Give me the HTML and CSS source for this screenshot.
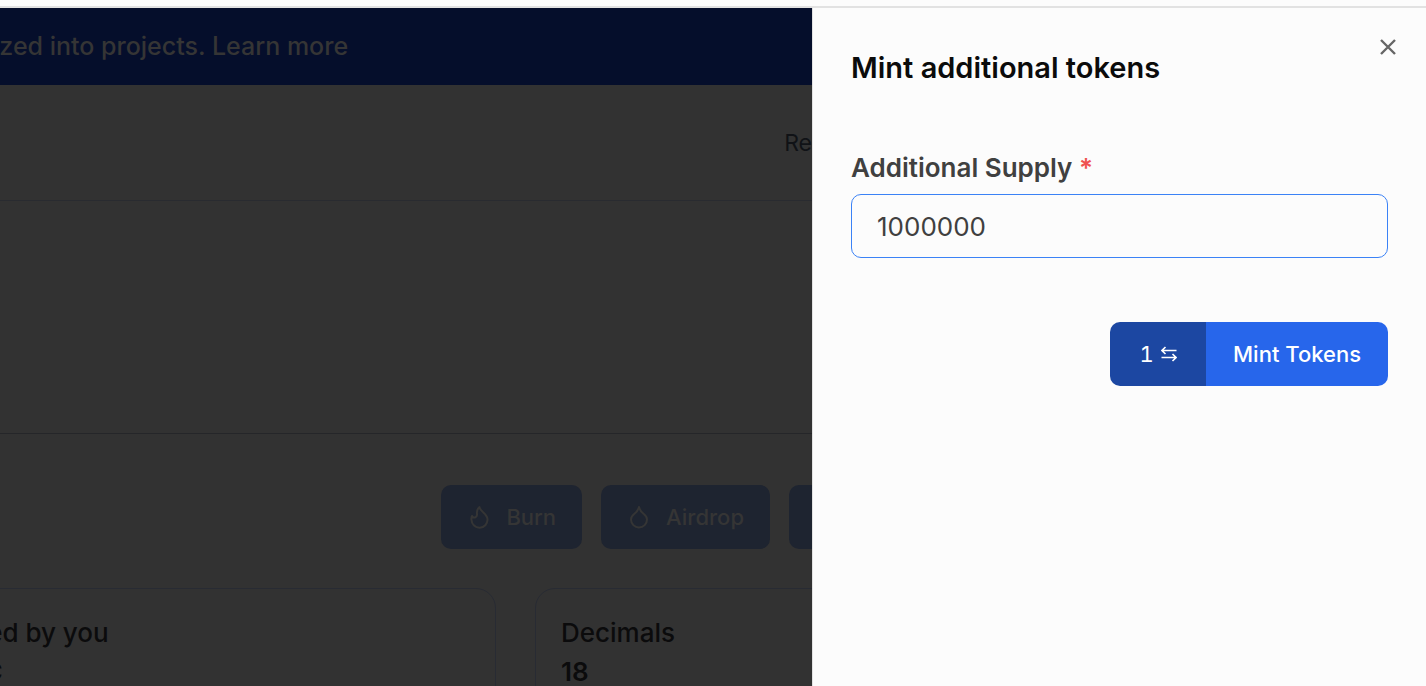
FILE: index.html
```html
<!DOCTYPE html>
<html lang="en">
<head>
<meta charset="utf-8">
<meta name="viewport" content="width=device-width, initial-scale=1">
<title>Mint additional tokens</title>
<link rel="stylesheet" href="styles.css">
</head>
<body>
<div class="top-edge"></div>
<div class="workspace">
  <main class="backdrop">
    <div class="page">
      <div class="banner"><span>organized into projects. <a href="#">Learn more</a></span></div>
      <header class="header"><a href="#" class="nav-link">Re</a></header>
      <section class="hero"></section>
      <section class="content">
        <div class="actions">
          <button class="action" type="button">
            <svg class="action-icon" viewBox="0 0 24 24" aria-hidden="true"><path d="M12.500 2c0 4.500 8 6.500 8 12.500a8 8 0 0 1-16 .5c-.3-1.500 0-3 .5-4 .5 1.200 2 1.700 3 1.500 1.500-.5 2.200-1.700 2-3.500-.3-3 .500-5.500 2.500-7z"/></svg>
            Burn
          </button>
          <button class="action" type="button">
            <svg class="action-icon" viewBox="0 0 24 24" aria-hidden="true"><path d="M12 22.500a8 8 0 0 0 8-8c0-2-1.200-3.900-3.200-5.500S12.500 4.500 12 2c-.5 2.500-2.800 5.400-4.800 7S4 12.500 4 14.500a8 8 0 0 0 8 8z"/></svg>
            Airdrop
          </button>
          <button class="action action-cut" type="button" aria-label="Mint"></button>
        </div>
        <dl class="cards">
          <div class="card"><dt>Owned by you</dt><dd>1 ABC</dd></div>
          <div class="card"><dt>Decimals</dt><dd>18</dd></div>
        </dl>
      </section>
    </div>
  </main>
  <aside class="drawer" role="dialog" aria-labelledby="drawer-title">
    <button class="close" type="button" aria-label="Close">
      <svg viewBox="0 0 16 16" aria-hidden="true"><path d="M1 1l14 14M15 1L1 15"/></svg>
    </button>
    <h1 class="title" id="drawer-title">Mint additional tokens</h1>
    <form class="form">
      <label class="label" for="supply">Additional Supply <span class="required">*</span></label>
      <input class="input" id="supply" type="text" value="1000000" required>
      <div class="submit-row">
        <div class="submit-group">
          <button class="count" type="button" aria-label="1 transaction"><span>1</span>
            <svg viewBox="0 0 16 16" aria-hidden="true"><path d="M15.500 4.500H1M4.500 1L1 4.500 4.500 8M.5 11.500H15M11.500 8L15 11.500 11.500 15"/></svg>
          </button>
          <button class="submit" type="submit">Mint Tokens</button>
        </div>
      </div>
    </form>
  </aside>
</div>
</body>
</html>
```
FILE: styles.css
```css
* { box-sizing: border-box; }
body {
  margin: 0;
  min-height: 100vh;
  display: flex;
  flex-direction: column;
  overflow: hidden;
  background: #fcfcfc;
  font-family: Inter, "Liberation Sans", sans-serif;
}
button, input { font: inherit; }
button { border: 0; padding: 0; cursor: pointer; }
.top-edge { height: 8px; border-bottom: 2px solid #e2e2e2; }
.workspace {
  flex: 1;
  height: calc(100vh - 8px);
  display: grid;
  grid-template-columns: minmax(0, 1fr) 614px;
}
.backdrop { background: #323232; overflow: hidden; }
.page { margin-left: -120px; }
.banner {
  padding: 20px 0 21px 44px;
  background: #050e2b;
  color: #353535;
  font-size: 25px;
  line-height: 36px;
  font-weight: 500;
}
.banner a { color: inherit; text-decoration: none; }
.header {
  padding: 40px 0 39px;
  border-bottom: 1px solid #292b30;
  text-align: right;
  font-size: 23px;
  line-height: 36px;
}
.nav-link { color: #101216; text-decoration: none; }
.hero { height: 233px; border-bottom: 1px solid #252629; }
.content { padding: 51px 0 0 24px; }
.actions { display: flex; justify-content: flex-end; gap: 19px; }
.action {
  display: flex;
  align-items: center;
  gap: 15px;
  height: 64px;
  padding: 0 26px;
  border-radius: 10px;
  background: #1e2430;
  color: #353535;
  font-size: 22px;
  font-weight: 500;
}
.action-icon {
  width: 24px;
  height: 24px;
  fill: none;
  stroke: currentColor;
  stroke-width: 2;
  stroke-linejoin: round;
}
.action-cut { width: 23px; padding: 0; border-radius: 10px 0 0 10px; }
.cards { display: flex; gap: 39px; margin: 39px 0 0; }
.card {
  flex: 0 0 592px;
  padding: 24px 25px;
  border: 1px solid #282b33;
  border-radius: 20px;
  color: #0b0b0c;
  font-size: 26px;
  line-height: 39px;
}
.card dt { font-weight: 500; }
.card dd { margin: 0; font-weight: 600; }
.drawer {
  position: relative;
  padding: 38px;
  border-left: 1px solid #e2e2e2;
  background: #fcfcfc;
}
.close {
  position: absolute;
  top: 27px;
  right: 26px;
  width: 24px;
  height: 24px;
  display: grid;
  place-items: center;
  background: none;
}
.close svg { width: 16px; height: 16px; fill: none; stroke: #666; stroke-width: 2.4; }
.title { margin: 0; font-size: 29px; line-height: 44px; font-weight: 600; color: #0b0b0b; }
.form { margin-top: 59px; display: flex; flex-direction: column; }
.label { margin-bottom: 7px; font-size: 26px; line-height: 38px; font-weight: 600; color: #404040; }
.required { color: #ef5350; }
.input {
  width: 100%;
  height: 64px;
  padding: 0 25px;
  border: 1px solid #3b82f6;
  border-radius: 10px;
  outline: 0;
  background: #fcfcfc;
  color: #404040;
  font-size: 26px;
}
.submit-row { display: flex; justify-content: flex-end; margin-top: 64px; }
.submit-group { display: flex; height: 64px; border-radius: 10px; overflow: hidden; color: #fff; font-size: 22px; }
.count {
  display: flex;
  align-items: center;
  justify-content: center;
  gap: 7px;
  width: 96px;
  background: #1c47a2;
  color: inherit;
  font-size: 22px;
  font-variant-numeric: tabular-nums;
}
.count svg { width: 16px; height: 16px; fill: none; stroke: currentColor; stroke-width: 1.6; }
.submit { padding: 0 27px; background: #2766eb; color: inherit; font-weight: 500; }
```
